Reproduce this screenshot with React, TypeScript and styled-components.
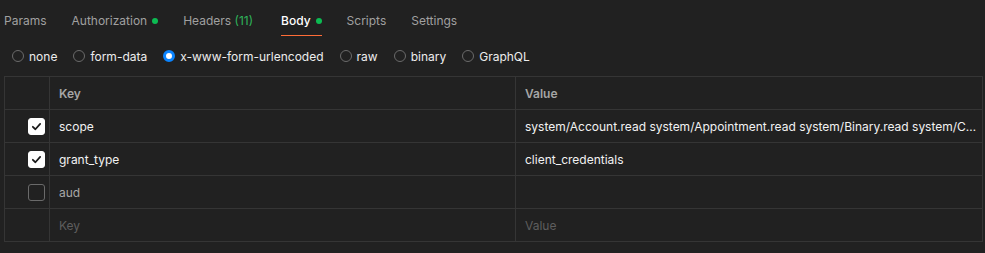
import { Fragment } from 'react';
import styled, { createGlobalStyle } from 'styled-components';

const GlobalStyle = createGlobalStyle`
    html, body {
        margin: 0;
        padding: 0;
        background: #212121;
    }
    body {
        font-family: Inter, "Noto Sans", "Liberation Sans", sans-serif;
        font-size: 12px;
        color: #f0f0f0;
    }
`;

const Page = styled.div`
    width: 985px;
    height: 253px;
    padding: 0 2px 0 4px;
    box-sizing: border-box;
    background: #212121;
`;

const TabBar = styled.div`
    display: flex;
    gap: 25px;
    height: 36px;
    align-items: stretch;
`;

const Tab = styled.div<{ $active?: boolean }>`
    display: flex;
    align-items: center;
    gap: 5px;
    padding-top: 5px;
    box-sizing: border-box;
    color: ${(p) => (p.$active ? '#ffffff' : '#a0a0a0')};
    font-weight: ${(p) => (p.$active ? 500 : 400)};
    border-bottom: 1px solid ${(p) => (p.$active ? '#ff6c37' : 'transparent')};
    margin-left: ${(p) => (p.$active ? '3px' : '0')};
`;

const Count = styled.span`
    color: #2fb45a;
`;

const Dot = styled.span`
    width: 6px;
    height: 6px;
    border-radius: 50%;
    background: #0cbb52;
    margin-top: 1px;
`;

const RadioRow = styled.div`
    display: flex;
    align-items: center;
    height: 40px;
    padding-left: 8px;
    gap: 16px;
`;

const RadioOption = styled.label`
    display: flex;
    align-items: center;
    gap: 5px;
    color: #ededed;
`;

const RadioCircle = styled.span<{ $checked?: boolean }>`
    width: 12px;
    height: 12px;
    box-sizing: border-box;
    border-radius: 50%;
    border: ${(p) => (p.$checked ? '3px solid #0a84ff' : '1px solid #6a6a6a')};
    background: ${(p) => (p.$checked ? '#ffffff' : 'transparent')};
`;

const Table = styled.div`
    display: grid;
    grid-template-columns: 45px 466px 1fr;
    border-top: 1px solid #353535;
    border-left: 1px solid #353535;
`;

const Cell = styled.div<{ $tone?: 'head' | 'text' | 'muted' | 'placeholder' }>`
    height: 33px;
    box-sizing: border-box;
    border-right: 1px solid #353535;
    border-bottom: 1px solid #353535;
    display: flex;
    align-items: center;
    padding: 0 4px 0 9px;
    overflow: hidden;
    white-space: nowrap;
    font-weight: ${(p) => (p.$tone === 'head' ? 600 : 400)};
    color: ${(p) =>
        p.$tone === 'head'
            ? '#a6a6a6'
            : p.$tone === 'muted'
            ? '#a8a8a8'
            : p.$tone === 'placeholder'
            ? '#5e5e5e'
            : '#f2f2f2'};
`;

const CheckCell = styled(Cell)`
    justify-content: flex-end;
    padding: 0 4px 0 0;
`;

const Ellipsis = styled.span`
    overflow: hidden;
    text-overflow: ellipsis;
    display: block;
    width: 100%;
`;

const Box = styled.span<{ $checked?: boolean }>`
    width: 17px;
    height: 17px;
    box-sizing: border-box;
    border-radius: 3px;
    display: flex;
    align-items: center;
    justify-content: center;
    background: ${(p) => (p.$checked ? '#ffffff' : 'transparent')};
    border: 1px solid ${(p) => (p.$checked ? '#ffffff' : '#6a6a6a')};
`;

const Check = () => (
    <svg width="11" height="11" viewBox="0 0 12 12">
        <path d="M2 6.3 L4.8 9 L10 3.2" fill="none" stroke="#1a1a1a" strokeWidth="1.9" strokeLinecap="round" strokeLinejoin="round" />
    </svg>
);

type Row = { key: string; value: string; checked: boolean };

const rows: Row[] = [
    {
        key: 'scope',
        value: 'system/Account.read system/Appointment.read system/Binary.read system/Coverage.read system/Encounter.read',
        checked: true,
    },
    { key: 'grant_type', value: 'client_credentials', checked: true },
    { key: 'aud', value: '', checked: false },
];

const tabs = ['Params', 'Authorization', 'Headers', 'Body', 'Scripts', 'Settings'];
const bodyTypes = ['none', 'form-data', 'x-www-form-urlencoded', 'raw', 'binary', 'GraphQL'];

const App = () => (
    <Page>
        <GlobalStyle />
        <TabBar>
            {tabs.map((t) => (
                <Tab key={t} $active={t === 'Body'}>
                    <span>
                        {t}
                        {t === 'Headers' && <Count> (11)</Count>}
                    </span>
                    {(t === 'Authorization' || t === 'Body') && <Dot />}
                </Tab>
            ))}
        </TabBar>
        <RadioRow>
            {bodyTypes.map((b) => (
                <RadioOption key={b}>
                    <RadioCircle $checked={b === 'x-www-form-urlencoded'} />
                    {b}
                </RadioOption>
            ))}
        </RadioRow>
        <Table>
            <Cell />
            <Cell $tone="head">Key</Cell>
            <Cell $tone="head">Value</Cell>
            {rows.map((r) => (
                <Fragment key={r.key}>
                    <CheckCell>
                        <Box $checked={r.checked}>{r.checked && <Check />}</Box>
                    </CheckCell>
                    <Cell $tone={r.checked ? 'text' : 'muted'}>{r.key}</Cell>
                    <Cell>
                        <Ellipsis>{r.value}</Ellipsis>
                    </Cell>
                </Fragment>
            ))}
            <Cell />
            <Cell $tone="placeholder">Key</Cell>
            <Cell $tone="placeholder">Value</Cell>
        </Table>
    </Page>
);

export default App;
